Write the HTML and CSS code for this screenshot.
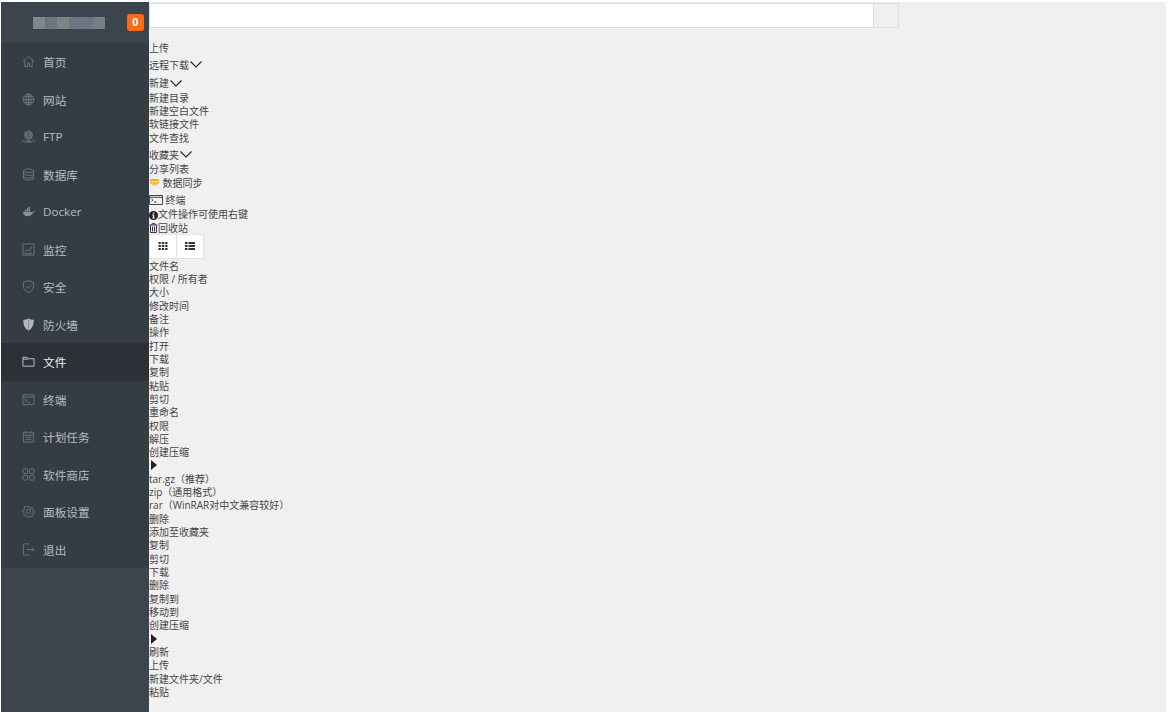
FILE: index.html
```html
<!DOCTYPE html>
<html lang="zh-CN">
<head>
<meta charset="utf-8">
<title>文件管理</title>
<link rel="stylesheet" href="styles.css">
</head>
<body>
<aside class="sidebar">
  <div class="brand">
    <div class="mosaic"><i class="m1"></i><i class="m2"></i><i class="m3"></i><i class="m4"></i><i class="m5"></i><i class="m6"></i></div>
    <span class="badge">0</span>
  </div>
  <nav class="menu">
    <a class="item"><svg class="ico" viewBox="0 0 14 14"><path d="M1 7 7 1.2 13 7M3 6v6.500h3V9h2v3.500h3V6"/></svg>首页</a>
    <a class="item"><svg class="ico" viewBox="0 0 14 14"><circle cx="7" cy="7" r="5.800"/><ellipse cx="7" cy="7" rx="2.600" ry="5.800"/><path d="M1.200 7h11.600M2 4h10M2 10h10M7 1v12"/></svg>网站</a>
    <a class="item"><svg class="ico" viewBox="0 0 14 14"><circle cx="7" cy="5.500" r="4.300"/><ellipse cx="7" cy="5.500" rx="2" ry="4.300"/><path d="M2.700 5.500h8.600M3 3.500h8M3 7.500h8M0 12h14M7 10v2M4 13h6"/></svg>FTP</a>
    <a class="item"><svg class="ico" viewBox="0 0 14 14"><ellipse cx="7" cy="3" rx="5.500" ry="2"/><path d="M1.500 3v8c0 1.100 2.500 2 5.500 2s5.500-.9 5.500-2V3M1.500 6c0 1.100 2.500 2 5.500 2s5.500-.9 5.500-2M1.500 9c0 1.100 2.500 2 5.500 2s5.500-.9 5.500-2"/></svg>数据库</a>
    <a class="item"><svg class="ico" viewBox="0 0 14 14"><path class="solid" d="M1 7.500h10.500c.5-1 1.200-1.300 2.300-1.100-.4 1.300-1.100 1.900-2.200 2C10.800 11 8.800 12 6 12c-3 0-4.700-1.600-5-4.500Z"/><path class="solid" d="M3 5.500h1.700V7H3zM5 5.500h1.700V7H5zM7 5.500h1.700V7H7zM5 3.600h1.700v1.500H5zM7 3.600h1.700v1.500H7zM7 1.800h1.700v1.500H7z"/></svg>Docker</a>
    <a class="item"><svg class="ico" viewBox="0 0 14 14"><path d="M1 1h12v12H1zM3 10l2.500-3 2 1.500L11 4M3 11.500h8"/></svg>监控</a>
    <a class="item"><svg class="ico" viewBox="0 0 14 14"><path d="M7 .8 12.500 2.500V7c0 3-2.300 5.200-5.500 6.300C3.800 12.200 1.500 10 1.500 7V2.500ZM4.300 6.800 6.300 8.800 9.800 5"/></svg>安全</a>
    <a class="item"><svg class="ico" viewBox="0 0 14 14"><path class="solid light" d="M7 .5c1.500 1 3.500 1.500 5.700 1.500 0 5.500-1.500 9.500-5.700 11.500C2.800 11.500 1.300 7.500 1.300 2 3.500 2 5.500 1.500 7 .5Z"/><path class="seam" d="M7 .5v13"/></svg>防火墙</a>
    <a class="item active"><svg class="ico" viewBox="0 0 14 14"><path d="M1 2.500h4.500l1 1.500H13v8H1ZM1 4.500h5.500"/></svg>文件</a>
    <a class="item"><svg class="ico" viewBox="0 0 14 14"><path d="M1 2h12v10.500H1zM1 4.300h12M3 6.500 5 8 3 9.500M6 10h3"/></svg>终端</a>
    <a class="item"><svg class="ico" viewBox="0 0 14 14"><path d="M1.500 2.500h11v10.500h-11zM1.500 5.500h11M4 1v2.500M10 1v2.500M4 7.800h6M4 10.300h6"/></svg>计划任务</a>
    <a class="item"><svg class="ico" viewBox="0 0 14 14"><rect x="1" y="1" width="5" height="5" rx="1"/><rect x="8" y="1" width="5" height="5" rx="1"/><rect x="1" y="8" width="5" height="5" rx="1"/><rect x="8" y="8" width="5" height="5" rx="1"/></svg>软件商店</a>
    <a class="item"><svg class="ico" viewBox="0 0 14 14"><circle cx="7" cy="7" r="2.200"/><path d="M6 1h2l.4 1.800 1.600.7 1.600-1 1.300 1.400-1 1.600.7 1.600L14 6.500v2l-1.800.3-.7 1.600 1 1.600-1.400 1.300-1.600-1-1.600.7L8 14H6l-.4-1.800-1.600-.7-1.600 1L1.100 11l1-1.600-.7-1.600L0 7.500v-2l1.800-.3.700-1.600-1-1.600L2.900.7l1.600 1 1.100-.6Z" transform="translate(.7 .7) scale(.9)"/></svg>面板设置</a>
    <a class="item"><svg class="ico" viewBox="0 0 14 14"><path d="M8 1H1.500v12H8M5.500 7H13M10.500 4.500 13 7l-2.500 2.500"/></svg>退出</a>
  </nav>
</aside>
<main class="main">
  <div class="toolbar">
    <div class="search"><div class="search-input"></div><div class="search-btn"></div></div>
  </div>
  <div class="line">上传</div>
  <div class="drop">远程下载<svg class="chev" viewBox="0 0 12 7"><path d="M.5.500 6 6 11.500.5"/></svg></div>
  <div class="drop">新建<svg class="chev" viewBox="0 0 12 7"><path d="M.5.500 6 6 11.500.5"/></svg></div>
  <div class="line">新建目录</div>
  <div class="line">新建空白文件</div>
  <div class="line">软链接文件</div>
  <div class="line">文件查找</div>
  <div class="drop">收藏夹<svg class="chev" viewBox="0 0 12 7"><path d="M.5.500 6 6 11.500.5"/></svg></div>
  <div class="line">分享列表</div>
  <div class="line gem-line"><svg class="gem" viewBox="0 0 11 8"><path d="M2 0h7l2 2.500L5.500 8 0 2.500Z"/><path class="gem-cut" d="M0 2.500h11M3.500 2.500 5.500 8l2-5.500"/></svg>数据同步</div>
  <div class="drop term-line"><svg class="term" viewBox="0 0 14 10"><path d="M.5.500h13v9H.5zM.5 2.300h13M2.500 4l1.500 1.200-1.500 1.200M5 7h2.500"/></svg>终端</div>
  <div class="line icon-line"><svg class="info" viewBox="0 0 9 9"><circle cx="4.500" cy="4.500" r="4.500"/><path class="info-i" d="M3.800 1.500h1.400v1.300H3.800zM3.300 3.500h1.900v3h.6v1H3.200v-1h.7v-2h-.6z"/></svg>文件操作可使用右键</div>
  <div class="line icon-line"><svg class="trash" viewBox="0 0 9 10"><path d="M.5 2h8M3 2V.7h3V2M1.500 2v7.500h6V2M3.500 3.500v5M5.500 3.500v5"/></svg>回收站</div>
  <div class="views">
    <button class="view"><svg class="view-ico" viewBox="0 0 9 8"><path d="M0 0h2.300v2H0zM3.300 0h2.400v2H3.300zM6.700 0H9v2H6.700zM0 3h2.300v2H0zM3.300 3h2.400v2H3.300zM6.700 3H9v2H6.700zM0 6h2.300v2H0zM3.300 6h2.400v2H3.300zM6.700 6H9v2H6.700z"/></svg></button>
    <button class="view"><svg class="view-ico" viewBox="0 0 10 8"><path d="M0 0h2.500v2H0zM3.500 0H10v2H3.500zM0 3h2.500v2H0zM3.500 3H10v2H3.500zM0 6h2.500v2H0zM3.500 6H10v2H3.500z"/></svg></button>
  </div>
  <div class="line">文件名</div>
  <div class="line">权限 / 所有者</div>
  <div class="line">大小</div>
  <div class="line">修改时间</div>
  <div class="line">备注</div>
  <div class="line">操作</div>
  <div class="line">打开</div>
  <div class="line">下载</div>
  <div class="line">复制</div>
  <div class="line">粘贴</div>
  <div class="line">剪切</div>
  <div class="line">重命名</div>
  <div class="line">权限</div>
  <div class="line">解压</div>
  <div class="line">创建压缩</div>
  <div class="line"><span class="caret"></span></div>
  <div class="line">tar.gz（推荐）</div>
  <div class="line">zip（通用格式）</div>
  <div class="line">rar（WinRAR对中文兼容较好）</div>
  <div class="line">删除</div>
  <div class="line">添加至收藏夹</div>
  <div class="line">复制</div>
  <div class="line">剪切</div>
  <div class="line">下载</div>
  <div class="line">删除</div>
  <div class="line">复制到</div>
  <div class="line">移动到</div>
  <div class="line">创建压缩</div>
  <div class="line"><span class="caret"></span></div>
  <div class="line">刷新</div>
  <div class="line">上传</div>
  <div class="line">新建文件夹/文件</div>
  <div class="line">粘贴</div>
</main>
</body>
</html>
```
FILE: styles.css
```css
* { box-sizing: border-box; }
html, body { height: 100%; }
html { background: #fff; overflow: hidden; }
body {
  margin: 0;
  padding: 2px 8px 0 1px;
  display: flex;
  font-family: "Open Sans", "Noto Sans CJK SC", sans-serif;
  color: #444;
}
.sidebar {
  width: 147.500px;
  flex: none;
  background: #3c444d;
}
.brand {
  height: 41px;
  display: flex;
  align-items: center;
  padding: 0 5px 0 32px;
  justify-content: space-between;
}
.mosaic { display: flex; height: 12px; }
.mosaic i { width: 12px; display: block; }
.m1 { background: #7f8788; }
.m2 { background: #6a767e; }
.m3 { background: #7d8586; }
.m4 { background: #6d7580; }
.m5 { background: #6b7480; }
.m6 { background: #777d80; }
.badge {
  width: 16.500px;
  height: 17px;
  border-radius: 3px;
  background: #f96c20;
  color: #fff;
  font: bold 11px/17px "Liberation Sans", sans-serif;
  text-align: center;
}
.menu { background: #353d44; }
.item {
  height: 37.500px;
  display: flex;
  align-items: center;
  gap: 8px;
  padding-left: 21px;
  font-size: 11.670px;
  color: #b8bcc0;
}
.item.active { background: #2c3138; color: #eee; }
.ico {
  width: 13px;
  height: 13px;
  flex: none;
  fill: none;
  stroke: #70767c;
  stroke-width: 1;
}
.active .ico { stroke: #c4c6c8; }
.ico .solid { fill: #8b9094; stroke: none; }
.ico .solid.light { fill: #b4b7ba; }
.ico .seam { stroke: #8a8f93; stroke-width: 1; }
.main {
  flex: 1;
  min-width: 0;
  background: #f0f0f0;
  font-size: 10px;
  line-height: 13.330px;
  overflow: hidden;
}
.toolbar {
  height: 39.800px;
  padding-top: 1px;
  border-bottom: 1px solid #ebebeb;
  padding-left: .5px;
}
.search { display: flex; height: 25px; width: 750px; }
.search-input { flex: 1; background: #fff; border: 1px solid #ddd; }
.search-btn { width: 25px; background: #f0f0f0; border: 1px solid #ddd; border-left: 0; }
.line { height: 13.330px; padding-left: .5px; white-space: nowrap; }
.drop {
  height: 18.330px;
  line-height: 18.330px;
  padding: 1px 0 0 .5px;
  display: flex;
  align-items: center;
  white-space: nowrap;
}
.chev {
  width: 12px;
  height: 7px;
  fill: none;
  stroke: #222;
  stroke-width: 1.100;
  margin-left: 1px;
}
.gem-line, .icon-line { display: flex; align-items: center; }
.gem { width: 11px; height: 8px; margin-right: 2.500px; fill: #f5a623; flex: none; }
.gem-cut { stroke: #fff; stroke-width: .6; fill: none; }
.term { width: 14px; height: 10px; margin-right: 2.500px; fill: none; stroke: #444; stroke-width: 1; flex: none; }
.info { width: 9px; height: 9px; flex: none; fill: #222; }
.info-i { fill: #f0f0f0; }
.trash { width: 9px; height: 10px; flex: none; fill: none; stroke: #4d2a4d; stroke-width: 1; }
.views { display: flex; height: 24.500px; margin: -1px 0 1px; padding-left: .5px; }
.view {
  width: 27.500px;
  padding: 0;
  border: 1px solid #e4e4e4;
  background: #fff;
  display: flex;
  align-items: center;
  justify-content: center;
}
.view + .view { border-left: 0; }
.view-ico { width: 10px; height: 8px; fill: #333; }
.caret {
  display: inline-block;
  margin-left: 1.500px;
  border-left: 6px solid #222;
  border-top: 5px solid transparent;
  border-bottom: 5px solid transparent;
  vertical-align: -1px;
}
```
